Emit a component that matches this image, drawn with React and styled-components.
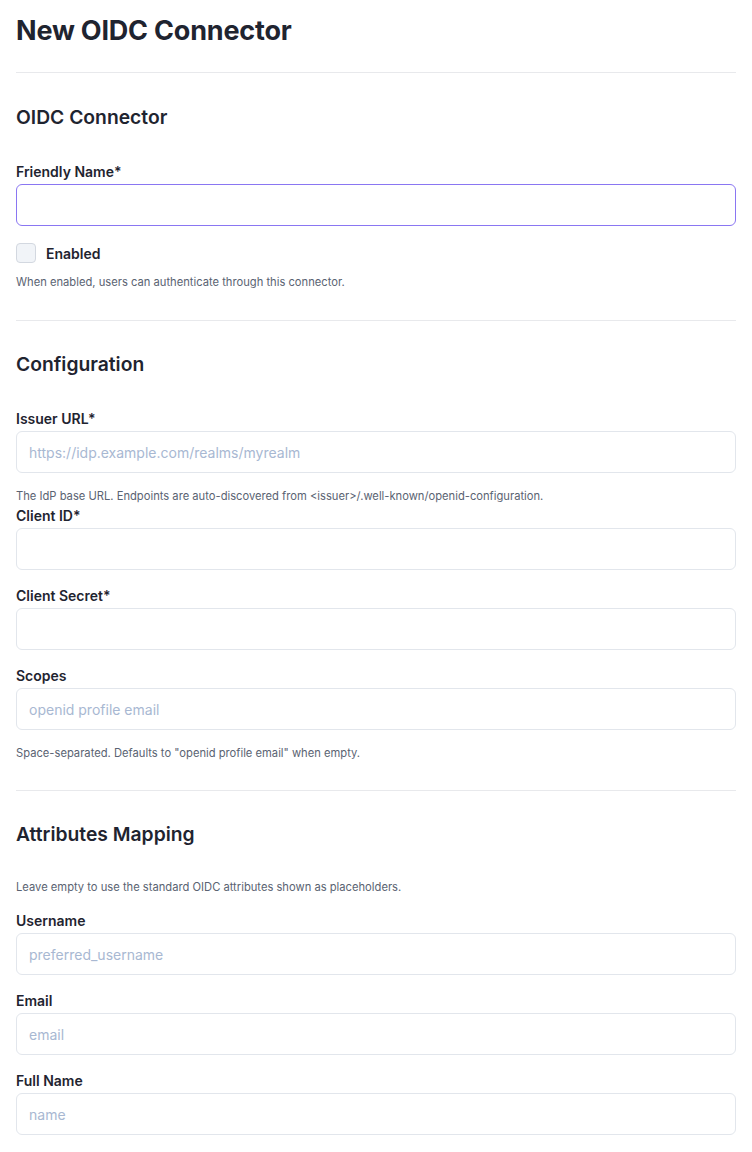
import styled, { createGlobalStyle } from "styled-components"

const GlobalStyle = createGlobalStyle`
  body {
    margin: 0;
    background: #ffffff;
    font-family: Inter, "Noto Sans", sans-serif;
    color: #1f2430;
  }
  * { box-sizing: border-box; }
`

const Page = styled.div`
  padding: 13px 16px 16px;
  width: 752px;
`

const Title = styled.h1`
  margin: 0;
  font-size: 27px;
  line-height: 36px;
  font-weight: 700;
  letter-spacing: -0.2px;
  color: #1f2430;
`

const Divider = styled.hr`
  border: 0;
  border-top: 1px solid #e8e9ec;
  margin: ${(p) => p.$top ?? 29}px 0 ${(p) => p.$bottom ?? 29}px;
`

const SectionTitle = styled.h2`
  margin: 0 0 31px;
  font-size: 19.3px;
  line-height: 28px;
  font-weight: 600;
  color: #1f2430;
`

const Field = styled.div`
  display: flex;
  flex-direction: column;
  margin-bottom: ${(p) => p.$mb ?? 16}px;
`

const Label = styled.label`
  font-size: 14px;
  line-height: 20px;
  font-weight: 600;
  color: #1f2430;
  margin-bottom: 2px;
`

const Input = styled.input`
  height: 42px;
  width: 100%;
  padding: 0 12px;
  font-family: Inter, "Noto Sans", sans-serif;
  font-size: 14px;
  color: #1f2430;
  border: 1px solid ${(p) => (p.$focused ? "#8a76f2" : "#e2e6ec")};
  border-radius: 6px;
  outline: none;
  background: #fff;
  &::placeholder {
    color: #a8b8d2;
  }
`

const Help = styled.p`
  margin: ${(p) => p.$top ?? 0}px 0 ${(p) => p.$bottom ?? 0}px;
  font-size: 11.2px;
  line-height: 16px;
  color: #5a6372;
`

const CheckRow = styled.label`
  display: flex;
  align-items: center;
  gap: 10px;
  font-size: 14px;
  font-weight: 600;
  color: #1f2430;
  margin-bottom: 11px;
`

const Box = styled.span`
  width: 20px;
  height: 20px;
  border-radius: 4px;
  border: 1px solid #d3d8e0;
  background: #f1f4f8;
`

const App = () => {
  return (
    <Page>
      <GlobalStyle />
      <Title>New OIDC Connector</Title>
      <Divider $top={23} $bottom={30} />

      <SectionTitle>OIDC Connector</SectionTitle>
      <Field $mb={17}>
        <Label>Friendly Name*</Label>
        <Input $focused />
      </Field>
      <CheckRow>
        <Box />
        Enabled
      </CheckRow>
      <Help>When enabled, users can authenticate through this connector.</Help>

      <Divider $top={30} />

      <SectionTitle>Configuration</SectionTitle>
      <Field $mb={2}>
        <Label>Issuer URL*</Label>
        <Input placeholder="https://idp.example.com/realms/myrealm" />
        <Help $top={15}>
          The IdP base URL. Endpoints are auto-discovered from &lt;issuer&gt;/.well-known/openid-configuration.
        </Help>
      </Field>
      <Field>
        <Label>Client ID*</Label>
        <Input />
      </Field>
      <Field>
        <Label>Client Secret*</Label>
        <Input />
      </Field>
      <Field $mb={0}>
        <Label>Scopes</Label>
        <Input placeholder="openid profile email" />
        <Help $top={15}>Space-separated. Defaults to "openid profile email" when empty.</Help>
      </Field>

      <Divider />

      <SectionTitle>Attributes Mapping</SectionTitle>
      <Help $bottom={16}>Leave empty to use the standard OIDC attributes shown as placeholders.</Help>
      <Field>
        <Label>Username</Label>
        <Input placeholder="preferred_username" />
      </Field>
      <Field>
        <Label>Email</Label>
        <Input placeholder="email" />
      </Field>
      <Field>
        <Label>Full Name</Label>
        <Input placeholder="name" />
      </Field>
    </Page>
  )
}

export default App
